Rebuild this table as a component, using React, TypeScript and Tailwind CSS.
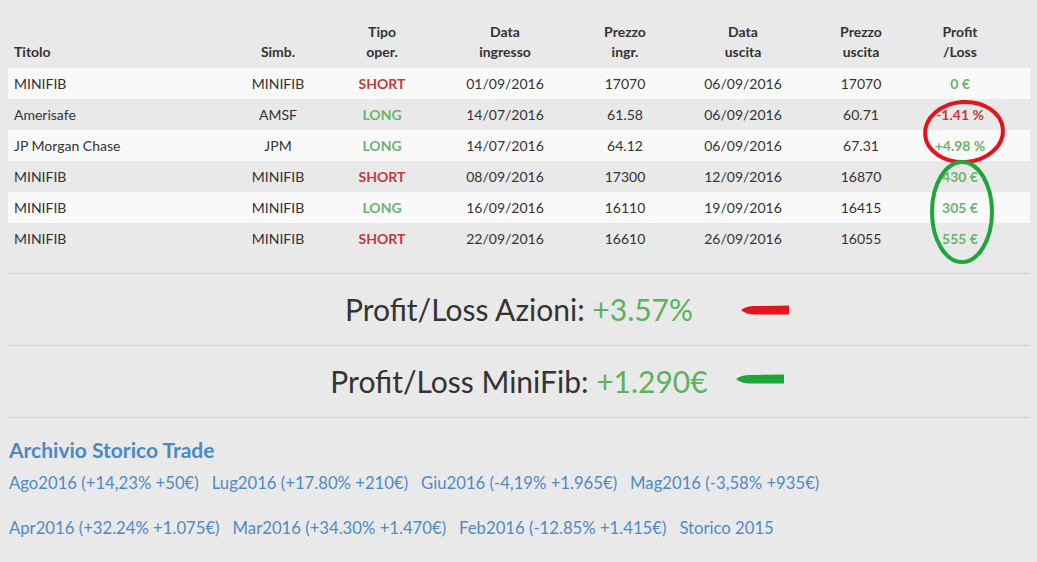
import React from 'react';

interface Trade {
  titolo: string;
  simb: string;
  tipo: 'SHORT' | 'LONG';
  dataIn: string;
  prezzoIn: string;
  dataOut: string;
  prezzoOut: string;
  pl: string;
  plNeg?: boolean;
}

const trades: Trade[] = [
  { titolo: 'MINIFIB', simb: 'MINIFIB', tipo: 'SHORT', dataIn: '01/09/2016', prezzoIn: '17070', dataOut: '06/09/2016', prezzoOut: '17070', pl: '0 €' },
  { titolo: 'Amerisafe', simb: 'AMSF', tipo: 'LONG', dataIn: '14/07/2016', prezzoIn: '61.58', dataOut: '06/09/2016', prezzoOut: '60.71', pl: '-1.41 %', plNeg: true },
  { titolo: 'JP Morgan Chase', simb: 'JPM', tipo: 'LONG', dataIn: '14/07/2016', prezzoIn: '64.12', dataOut: '06/09/2016', prezzoOut: '67.31', pl: '+4.98 %' },
  { titolo: 'MINIFIB', simb: 'MINIFIB', tipo: 'SHORT', dataIn: '08/09/2016', prezzoIn: '17300', dataOut: '12/09/2016', prezzoOut: '16870', pl: '430 €' },
  { titolo: 'MINIFIB', simb: 'MINIFIB', tipo: 'LONG', dataIn: '16/09/2016', prezzoIn: '16110', dataOut: '19/09/2016', prezzoOut: '16415', pl: '305 €' },
  { titolo: 'MINIFIB', simb: 'MINIFIB', tipo: 'SHORT', dataIn: '22/09/2016', prezzoIn: '16610', dataOut: '26/09/2016', prezzoOut: '16055', pl: '555 €' },
];

const archivio = [
  ['Ago2016 (+14,23% +50€)', 'Lug2016 (+17.80% +210€)', 'Giu2016 (-4,19% +1.965€)', 'Mag2016 (-3,58% +935€)'],
  ['Apr2016 (+32.24% +1.075€)', 'Mar2016 (+34.30% +1.470€)', 'Feb2016 (-12.85% +1.415€)', 'Storico 2015'],
];

// freccia disegnata a mano (annotazione)
function Arrow({ color }: { color: string }) {
  return (
    <svg width="50" height="12" viewBox="0 0 50 12" className="absolute">
      <path d="M1 6 C5 2.5 11 1.5 18 2 L49 1.5 L49 10.5 L18 10.5 C11 11 5 9.5 1 6 Z" fill={color} />
    </svg>
  );
}

export default function App() {
  return (
    <div className="min-h-[562px] bg-[#e9e9e9] px-[8px] pt-[22px] text-[#333]" style={{ fontFamily: 'Lato, "Open Sans", sans-serif' }}>
      <div className="relative w-[1022px]">
        <table className="w-full table-fixed border-collapse text-[14px]">
          <colgroup>
            <col className="w-[222px]" />
            <col className="w-[96px]" />
            <col className="w-[112px]" />
            <col className="w-[134px]" />
            <col className="w-[106px]" />
            <col className="w-[130px]" />
            <col className="w-[106px]" />
            <col className="w-[116px]" />
          </colgroup>
          <thead>
            <tr className="font-bold leading-[20px] align-bottom">
              <th className="px-[6px] pb-[6px] text-left">Titolo</th>
              <th className="px-[6px] pb-[6px] text-center">Simb.</th>
              <th className="px-[6px] pb-[6px] text-center">Tipo<br />oper.</th>
              <th className="px-[6px] pb-[6px] text-center">Data<br />ingresso</th>
              <th className="px-[6px] pb-[6px] text-center">Prezzo<br />ingr.</th>
              <th className="px-[6px] pb-[6px] text-center">Data<br />uscita</th>
              <th className="px-[6px] pb-[6px] text-center">Prezzo<br />uscita</th>
              <th className="pl-[6px] pr-[30px] pb-[6px] text-center">Profit<br />/Loss</th>
            </tr>
          </thead>
          <tbody>
            {trades.map((t, i) => (
              <tr key={i} className={`h-[31px] ${i % 2 === 0 ? 'bg-[#f9f9f9]' : 'bg-[#e9e9e9]'}`}>
                <td className="px-[6px] text-left">{t.titolo}</td>
                <td className="px-[6px] text-center">{t.simb}</td>
                <td className={`px-[6px] text-center font-bold ${t.tipo === 'SHORT' ? 'text-[#c0393b]' : 'text-[#6cb46c]'}`}>{t.tipo}</td>
                <td className="px-[6px] text-center">{t.dataIn}</td>
                <td className="px-[6px] text-center">{t.prezzoIn}</td>
                <td className="px-[6px] text-center">{t.dataOut}</td>
                <td className="px-[6px] text-center">{t.prezzoOut}</td>
                <td className={`pl-[6px] pr-[30px] text-center font-bold ${t.plNeg ? 'text-[#c0393b]' : 'text-[#6cb46c]'}`}>{t.pl}</td>
              </tr>
            ))}
          </tbody>
        </table>

        {/* cerchi di annotazione */}
        <svg className="absolute left-[914px] top-[76px]" width="84" height="68" viewBox="0 0 84 68">
          <ellipse cx="42" cy="34" rx="39" ry="30" fill="none" stroke="#e5141c" strokeWidth="4" transform="rotate(-4 42 34)" />
        </svg>
        <svg className="absolute left-[920px] top-[137px]" width="68" height="106" viewBox="0 0 68 106">
          <ellipse cx="34" cy="53" rx="30" ry="50" fill="none" stroke="#1ea63a" strokeWidth="4" />
        </svg>

        <div className="mt-[19px] border-t border-[#cfcfcf]" />
        <div className="relative flex h-[71px] items-center justify-center text-[30px]">
          <span>Profit/Loss Azioni: <span className="text-[#5cb25c]">+3.57%</span></span>
          <div className="absolute left-[732px] top-[30px]"><Arrow color="#e5141c" /></div>
        </div>
        <div className="border-t border-[#cfcfcf]" />
        <div className="relative flex h-[71px] items-center justify-center text-[30px]">
          <span>Profit/Loss MiniFib: <span className="text-[#5cb25c]">+1.290€</span></span>
          <div className="absolute left-[727px] top-[27px]"><Arrow color="#1ea63a" /></div>
        </div>
        <div className="border-t border-[#cfcfcf]" />

        <h3 className="mt-[19px] px-[1px] text-[21px] font-bold leading-[26px] text-[#4a89c8]">Archivio Storico Trade</h3>
        <div className="mt-[9px] flex flex-col gap-[22px] px-[1px] text-[16.7px] leading-[23px] text-[#4f8ac6]">
          {archivio.map((row, r) => (
            <div key={r} className="flex gap-[13px]">
              {row.map((l) => (
                <a key={l} href="#" className="whitespace-nowrap">{l}</a>
              ))}
            </div>
          ))}
        </div>
      </div>
    </div>
  );
}
